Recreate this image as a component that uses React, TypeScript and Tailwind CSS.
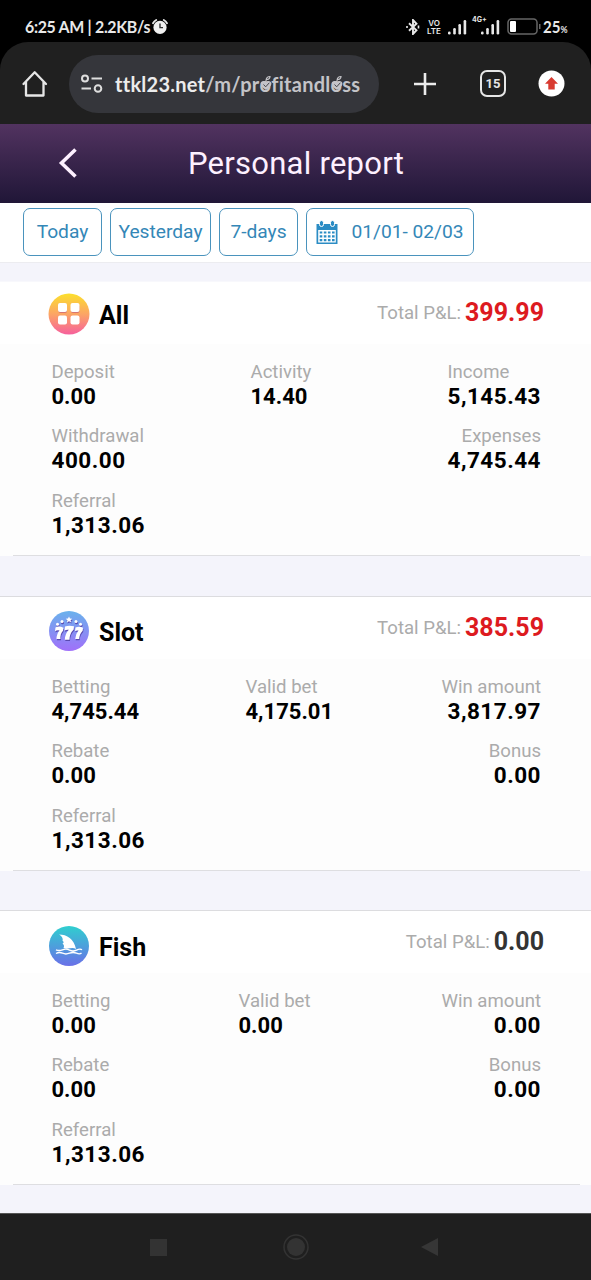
import type { ReactNode } from "react";

type Stat = { label: string; value: string; size?: string; left?: boolean };

const NORMAL = "text-[22px]";
const WIDE = "text-[22.5px] tracking-[0.5px]";

function Bars() {
  return (
    <svg width="19" height="16" viewBox="0 0 19 16" fill="#e8e8e8">
      <rect x="0" y="12.5" width="2.6" height="3" rx="1.2" />
      <rect x="5.2" y="9" width="2.6" height="6.5" rx="1.2" />
      <rect x="10.4" y="5" width="2.6" height="10.5" rx="1.2" />
      <rect x="15.6" y="1" width="2.6" height="14.5" rx="1.2" />
    </svg>
  );
}

function StatusBar() {
  return (
    <div className="flex h-[42px] items-center bg-black pt-[11px] pl-[25px] font-['Lato',sans-serif] text-[#e8e8e8]">
      <span className="w-[124px] origin-left scale-x-[0.91] text-[17.5px] leading-none font-bold tracking-[-0.35px] whitespace-nowrap">6:25 AM | 2.2KB/s</span>
      <svg className="ml-[3px]" width="16" height="16" viewBox="0 0 16 16">
        <path d="M1 4.2A8 8 0 0 1 4.2 1M15 4.2A8 8 0 0 0 11.8 1" stroke="#e8e8e8" strokeWidth="1.8" fill="none" strokeLinecap="round" />
        <circle cx="8" cy="8.4" r="6.6" fill="#f0f0f0" />
        <path d="M8 4.6v4h3" stroke="#333" strokeWidth="1.4" fill="none" />
      </svg>
      <svg className="ml-[238px]" width="14" height="16" viewBox="0 0 14 16" fill="none" stroke="#e8e8e8" strokeWidth="1.9">
        <path d="M3 4.2l7.5 7L7 15V1l3.5 3.8-7.5 7" />
        <path d="M1 7v2M12.5 6.6v2.8" strokeWidth="1.6" />
      </svg>
      <div className="ml-[6px] w-[16px] text-center font-['Inter',sans-serif] text-[8px] leading-[8px] font-semibold">
        VO
        <br />
        LTE
      </div>
      <div className="ml-[6px]">
        <Bars />
      </div>
      <div className="relative ml-[14px]">
        <span className="absolute -top-[3px] -left-[9px] font-['Inter',sans-serif] text-[7px] leading-none font-bold">4G+</span>
        <Bars />
      </div>
      <svg className="ml-[7px]" width="35" height="17" viewBox="0 0 35 17">
        <rect x="1" y="1" width="29" height="15" rx="3.5" fill="none" stroke="#666" strokeWidth="1.5" />
        <rect x="3" y="3" width="6" height="11" rx="1" fill="#fff" />
        <rect x="32" y="6" width="1.5" height="5" fill="#666" />
      </svg>
      <span className="ml-[1px] origin-left scale-x-[0.86] text-[17.5px] leading-none font-bold">
        25<span className="text-[10px]">%</span>
      </span>
    </div>
  );
}

function HeartO() {
  return (
    <span className="relative inline-block">
      o
      <svg className="absolute top-[5px] left-0" width="12" height="17" viewBox="0 0 12 17">
        <path d="M6 16C2 13.600.6 11.700.6 9.600 .6 6.600 4.600 6 6 8.300 7.300 6 11.400 6.600 11.400 9.600c0 2.100-1.400 4-5.400 6.400z" fill="#c4c4c8" />
        <path d="M3.500 10.500l2.200 2.300 3.600-4" stroke="#45464b" strokeWidth="1" fill="none" />
        <path d="M6 7C6 3.500 8 2.500 10 2.500c0 2-1.500 3-3.500 3" stroke="#c4c4c8" strokeWidth="1.200" fill="none" />
      </svg>
    </span>
  );
}

function BrowserBar() {
  return (
    <div className="bg-black">
      <div className="flex h-[82px] items-center rounded-t-[28px] bg-[#202020] pt-px">
        <svg className="ml-[21px]" width="28" height="28" viewBox="0 0 28 28" fill="none" stroke="#e6e6e6" strokeWidth="2.3" strokeLinejoin="round" strokeLinecap="round">
          <path d="M2.500 14L13.700 2.300 25 14M5 12v13.500h17.500V12" />
        </svg>
        <div className="ml-[20px] flex h-[58px] w-[310px] items-center rounded-full bg-[#35363b] pl-[12px]">
          <svg width="22" height="20" viewBox="0 0 22 20" fill="none" stroke="#dedede" strokeWidth="2">
            <circle cx="4" cy="4.500" r="3" />
            <path d="M10.500 4.500H21M0.500 14.500H10" />
            <circle cx="17" cy="14.500" r="3.300" />
          </svg>
          <span className="ml-[12px] pt-px font-['Lato',sans-serif] text-[20px] font-bold tracking-[0.250px] whitespace-nowrap text-[#c4c4c8]">
            <span className="text-[#ececec]">ttkl23.net</span>/m/pr<HeartO />fitandl<HeartO />ss
          </span>
        </div>
        <svg className="ml-[34px]" width="24" height="24" viewBox="0 0 24 24" stroke="#ececec" strokeWidth="2.600">
          <path d="M12 1v22M1 12h22" />
        </svg>
        <div className="ml-[43px] flex h-[27px] w-[26px] items-center justify-center rounded-[7px] border-[2.5px] border-[#e6e6e6] font-['Roboto',sans-serif] text-[13px] font-bold text-[#e6e6e6]">
          15
        </div>
        <svg className="ml-[32px]" width="27" height="27" viewBox="0 0 27 27">
          <circle cx="13.500" cy="13.500" r="13" fill="#fff" />
          <path d="M13.500 7L20 13.700H16.700V19.500H10.300V13.700H7z" fill="#d83a30" />
        </svg>
      </div>
    </div>
  );
}

function AllIcon() {
  return (
    <svg width="42" height="42" viewBox="0 0 42 42">
      <defs>
        <linearGradient id="all" x1="0" y1="0" x2="0" y2="1">
          <stop offset="0" stopColor="#fce02c" />
          <stop offset="0.500" stopColor="#fca565" />
          <stop offset="1" stopColor="#f6609c" />
        </linearGradient>
      </defs>
      <circle cx="21" cy="21" r="20.500" fill="url(#all)" />
      <g fill="#c9607a" opacity="0.700">
        <rect x="10.500" y="11.500" width="8.500" height="8.500" rx="2" />
        <rect x="23" y="11.500" width="8.500" height="8.500" rx="2" />
      </g>
      <g fill="#fff">
        <rect x="10" y="10" width="9" height="9" rx="2" />
        <rect x="22.500" y="10" width="9" height="9" rx="2" />
        <rect x="10" y="22.500" width="9" height="9" rx="2" />
        <rect x="22.500" y="22.500" width="9" height="9" rx="2" />
      </g>
    </svg>
  );
}

function SlotIcon() {
  return (
    <svg width="42" height="42" viewBox="0 0 42 42">
      <defs>
        <linearGradient id="slot" x1="0" y1="0" x2="0" y2="1">
          <stop offset="0" stopColor="#6ab2ec" />
          <stop offset="1" stopColor="#a070fa" />
        </linearGradient>
        <g id="sevens">
          <path d="M7.500 17.500q3-2 8 .2l-.5 3q-3 3-2.500 8.300H8.500q0-5 3-8.500-2.500-.5-4.500.7z" />
          <path d="M17 16.500q4-1.500 9-.2l-.3 3.200q-4.200 4-4.200 10.300h-4.700q.2-6 4-10-2.500-.3-4.300.8z" />
          <path d="M27.500 17.500q4-1.500 7.500.2l-.3 3q-3.200 3-3.500 8.300h-4q.2-5 3.300-8.500-2-.3-3.500.6z" />
          <circle cx="9.500" cy="14.300" r="1.500" />
          <circle cx="14" cy="11.500" r="1.500" />
          <path d="M21 6.500l1 2 2.200.2-1.600 1.500.5 2.200-2.100-1.100-2.100 1.100.5-2.200-1.600-1.500 2.200-.2z" />
          <circle cx="28" cy="11.500" r="1.500" />
          <circle cx="32.500" cy="14.300" r="1.500" />
        </g>
      </defs>
      <circle cx="21" cy="21" r="20" fill="url(#slot)" />
      <use href="#sevens" fill="#5a49b0" x="0.500" y="1.200" />
      <use href="#sevens" fill="#fff" />
    </svg>
  );
}

function FishIcon() {
  return (
    <svg width="42" height="42" viewBox="0 0 42 42">
      <defs>
        <linearGradient id="fish" x1="0" y1="0" x2="0" y2="1">
          <stop offset="0" stopColor="#2fcfcf" />
          <stop offset="1" stopColor="#6a70e8" />
        </linearGradient>
      </defs>
      <circle cx="21" cy="21" r="20" fill="url(#fish)" />
      <path d="M11 9.500c8 0 15 4.500 17 14.500-4-2.500-8 1-12.500-1 1-2 .5-3-1-4.500 1.500-.8 1.500-1.500 0-2.800 1-2.200-1-4.700-3.500-6.200z" fill="#fff" />
      <path d="M8 24.800q3 1.500 6.500 0t7 .3 7 0 5.500-.4M8 28.500q3.200-1.800 6.500-.3t7 0 7 0 5-.2" stroke="#fff" strokeWidth="1.400" fill="none" />
    </svg>
  );
}

function StatCell({ stat, end }: { stat?: Stat; end?: boolean }) {
  if (!stat) return <div />;
  return (
    <div className={end && !stat.left ? "text-right" : "text-left"}>
      <div className="text-[18.6px] leading-[24px] text-[#ababab]">{stat.label}</div>
      <div className={`leading-[25px] font-bold text-black ${stat.size ?? WIDE}`}>{stat.value}</div>
    </div>
  );
}

type SectionProps = {
  icon: ReactNode;
  name: string;
  total: string;
  totalColor: string;
  rows: (Stat | undefined)[][];
  cols: string;
  titleClass: string;
  border?: string;
};

function Section({ icon, name, total, totalColor, rows, cols, titleClass, border = "border-[#dcdcdf]" }: SectionProps) {
  return (
    <section className={`h-[275px] shrink-0 border-t bg-[#fdfdfd] ${border}`}>
      <div className="flex h-[62px] items-start justify-between bg-white pr-[47px] pl-[48px]">
        <div className={`flex items-center gap-[9px] ${titleClass}`}>
          {icon}
          <span className="pt-[3px] text-[25px] leading-[30px] font-bold text-black">{name}</span>
        </div>
        <div className="flex items-center pt-[15px] leading-[32px]">
          <span className="text-[18.6px]  text-[#ababab]">Total P&amp;L:</span>
          <span className={`ml-[4px] text-[25px] font-bold ${totalColor}`}>{total}</span>
        </div>
      </div>
      <div className="flex h-[212px] flex-col gap-[15.5px] pt-[15.5px] pr-[50px] pl-[51.5px]">
        {rows.map((row, i) => (
          <div key={i} className={`grid ${cols}`}>
            <StatCell stat={row[0]} />
            <StatCell stat={row[1]} />
            <StatCell stat={row[2]} end />
          </div>
        ))}
        <div className="-mx-[39px] mt-auto h-px shrink-0 bg-[#dedee1]" />
      </div>
    </section>
  );
}

function CalendarIcon() {
  return (
    <svg width="22" height="25" viewBox="0 0 22 25">
      <path d="M0.500 4h21v20h-21z" fill="#2b8cc4" />
      <path d="M2.200 10h17.600v12.500H2.200z" fill="#fff" />
      <rect x="3.500" y="0.500" width="4" height="6" rx="2" fill="#2b8cc4" stroke="#fff" />
      <rect x="14.500" y="0.500" width="4" height="6" rx="2" fill="#2b8cc4" stroke="#fff" />
      <path d="M3.700 12.500h15M3.700 16.300h15M3.700 20.100h15" stroke="#2b8cc4" strokeWidth="2.200" strokeDasharray="2.600 1.500" />
    </svg>
  );
}

const filterClass = "flex h-[48px] items-center justify-center rounded-[7px] border border-[#4a93bd]";

export default function App() {
  return (
    <div className="flex h-[1280px] w-[591px] flex-col overflow-hidden bg-[#f4f4fb] font-['Roboto',sans-serif]">
      <StatusBar />
      <BrowserBar />
      <header className="flex h-[79px] items-center bg-gradient-to-b from-[#523360] to-[#201637] pl-[58px]">
        <svg width="20" height="32" viewBox="0 0 20 32" fill="none" stroke="#fdf0ff" strokeWidth="3.600">
          <path d="M17.500 1.500L3.500 15l14 13.500" />
        </svg>
        <h1 className="ml-[110px] text-[31px] leading-none tracking-[0.25px] text-[#fdf0ff]">Personal report</h1>
      </header>
      <div className="flex h-[60px] shrink-0 gap-[8px] border-b border-[#ececf0] bg-white pt-[5px] pl-[23px] text-[19.2px] text-[#3487b7]">
        <button className={`${filterClass} w-[79px]`}>Today</button>
        <button className={`${filterClass} w-[101px]`}>Yesterday</button>
        <button className={`${filterClass} w-[79px]`}>7-days</button>
        <button className={`${filterClass} w-[168px]`}>
          <CalendarIcon />
          <span className="ml-[13px]">01/01- 02/03</span>
        </button>
      </div>
      <main className="flex h-[950px] shrink-0 flex-col overflow-hidden pt-[18px]">
        <Section
          icon={<AllIcon />}
          name="All"
          total="399.99"
          totalColor="text-[#dd1a20]"
          titleClass="pt-[11px]"
          border="border-[#f8f8fc]"
          cols="grid-cols-[199px_1fr_auto]"
          rows={[
            [{ label: "Deposit", value: "0.00", size: NORMAL }, { label: "Activity", value: "14.40", size: NORMAL }, { label: "Income", value: "5,145.43", left: true }],
            [{ label: "Withdrawal", value: "400.00" }, undefined, { label: "Expenses", value: "4,745.44" }],
            [{ label: "Referral", value: "1,313.06" }],
          ]}
        />
        <div className="h-[40px] shrink-0" />
        <Section
          icon={<SlotIcon />}
          name="Slot"
          total="385.59"
          totalColor="text-[#dd1a20]"
          titleClass="pt-[13px]"
          cols="grid-cols-[194px_1fr_auto]"
          rows={[
            [{ label: "Betting", value: "4,745.44", size: NORMAL }, { label: "Valid bet", value: "4,175.01", size: NORMAL }, { label: "Win amount", value: "3,817.97" }],
            [{ label: "Rebate", value: "0.00", size: NORMAL }, undefined, { label: "Bonus", value: "0.00" }],
            [{ label: "Referral", value: "1,313.06" }],
          ]}
        />
        <div className="h-[39px] shrink-0" />
        <Section
          icon={<FishIcon />}
          name="Fish"
          total="0.00"
          totalColor="text-[#333]"
          titleClass="pt-[14px]"
          cols="grid-cols-[187px_1fr_auto]"
          rows={[
            [{ label: "Betting", value: "0.00", size: NORMAL }, { label: "Valid bet", value: "0.00", size: NORMAL }, { label: "Win amount", value: "0.00" }],
            [{ label: "Rebate", value: "0.00", size: NORMAL }, undefined, { label: "Bonus", value: "0.00" }],
            [{ label: "Referral", value: "1,313.06" }],
          ]}
        />
      </main>
      <nav className="flex h-[67px] shrink-0 items-center border-t border-[#555] bg-[#1f1f1f]">
        <div className="ml-[150px] h-[17px] w-[17px] bg-[#333]" />
        <svg className="ml-[115px]" width="28" height="28" viewBox="0 0 28 28">
          <circle cx="14" cy="14" r="12" fill="none" stroke="#333" strokeWidth="1.500" />
          <circle cx="14" cy="14" r="9" fill="#333" />
        </svg>
        <svg className="ml-[111px]" width="17" height="18" viewBox="0 0 17 18" fill="#363636">
          <path d="M0 9L17 0v18z" />
        </svg>
      </nav>
    </div>
  );
}
